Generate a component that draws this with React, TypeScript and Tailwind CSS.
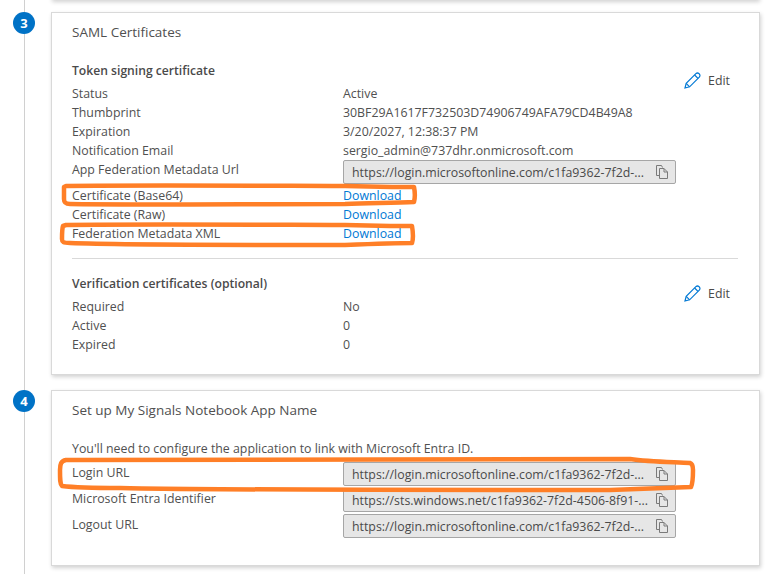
import type { ReactNode } from 'react';

const LOGIN_URL = 'https://login.microsoftonline.com/c1fa9362-7f2d-...';
const ENTRA_URL = 'https://sts.windows.net/c1fa9362-7f2d-4506-8f91-...';

function CopyIcon() {
  return (
    <svg width="12" height="14" viewBox="0 0 12 14" fill="none" stroke="#7a7a7a" strokeWidth="1" className="shrink-0">
      <path d="M3.5 10.5H0.5V0.5H5.5L6.5 2.5" />
      <path d="M3.5 3.5H8L11.5 7V13.5H3.5Z" />
      <path d="M8 3.5V7H11.5" />
    </svg>
  );
}

function PencilIcon() {
  return (
    <svg width="17" height="17" viewBox="0 0 17 17" fill="none" stroke="#0078d4" strokeWidth="1.2" className="shrink-0">
      <path d="M1 16L2.2 11.4L11.9 1.7C12.8 0.8 14.1 0.8 15 1.7L15.3 2C16.2 2.9 16.2 4.2 15.3 5.1L5.6 14.8Z" />
      <path d="M2.2 11.4L5.6 14.8" />
      <path d="M10.6 3L14 6.4" />
    </svg>
  );
}

function CopyField({ value }: { value: string }) {
  return (
    <div className="flex h-[24px] w-[333px] items-center justify-between rounded-[2px] border border-[#a6a6a6] bg-[#e6e6e6] pl-[8px] pr-[7px] text-[#4a4a4a]">
      <span className="whitespace-nowrap">{value}</span>
      <CopyIcon />
    </div>
  );
}

function Row({ label, children }: { label: string; children: ReactNode }) {
  return (
    <div className="grid h-[19px] grid-cols-[271px_1fr] items-center">
      <span className="whitespace-nowrap">{label}</span>
      <span className="whitespace-nowrap">{children}</span>
    </div>
  );
}

function Download() {
  return <span className="text-[#0078d4]">Download</span>;
}

function EditButton() {
  return (
    <div className="mr-[7px] mt-[10px] flex items-center gap-[7px] self-start text-[#4a4a4a]">
      <PencilIcon />
      <span className="pr-[1px]">Edit</span>
    </div>
  );
}

function Badge({ n, className }: { n: number; className: string }) {
  return (
    <div className={`absolute left-[13px] flex h-[22px] w-[22px] items-center justify-center rounded-full bg-[#0072c6] text-[13px] font-bold text-white ${className}`}>
      {n}
    </div>
  );
}

export default function App() {
  return (
    <div
      className="relative h-[574px] w-[773px] overflow-hidden bg-white text-[12.35px] leading-[19px] text-[#505050]"
      style={{ fontFamily: '"Open Sans", "Noto Sans", sans-serif' }}
    >
      <div className="absolute bottom-0 left-[24px] top-0 w-px bg-[#d0d0d0]" />
      <div className="absolute left-[51px] right-[14px] top-[-10px] h-[10px] shadow-[1px_2px_4px_rgba(0,0,0,0.18)]" />
      <Badge n={3} className="top-[12px]" />
      <Badge n={4} className="top-[390px]" />

      <div className="flex flex-col gap-[15px] pl-[51px] pr-[13px] pt-[12px]">
        <section className="h-[363px] border border-[#d9d9d9] bg-white pl-[20px] pr-[21px] pt-[10px] shadow-[1px_2px_4px_rgba(0,0,0,0.18)]">
          <h2 className="text-[13.5px] leading-[19px] text-[#505050]">SAML Certificates</h2>

          <div className="mt-[19px] flex justify-between">
            <div className="flex-1">
              <h3 className="mb-[4px] text-[12.15px] font-semibold text-[#4a4a4a]">Token signing certificate</h3>
              <Row label="Status">Active</Row>
              <Row label="Thumbprint">30BF29A1617F732503D74906749AFA79CD4B49A8</Row>
              <Row label="Expiration">3/20/2027, 12:38:37 PM</Row>
              <Row label="Notification Email">sergio_admin@737dhr.onmicrosoft.com</Row>
              <div className="grid h-[26px] grid-cols-[271px_1fr]">
                <span className="whitespace-nowrap">App Federation Metadata Url</span>
                <CopyField value={LOGIN_URL} />
              </div>
              <Row label="Certificate (Base64)"><Download /></Row>
              <Row label="Certificate (Raw)"><Download /></Row>
              <Row label="Federation Metadata XML"><Download /></Row>
            </div>
            <EditButton />
          </div>

          <div className="mt-[15px] h-px bg-[#d9d9d9]" />

          <div className="mt-[15px] flex justify-between">
            <div className="flex-1">
              <h3 className="mb-[4px] text-[12.15px] font-semibold text-[#4a4a4a]">Verification certificates (optional)</h3>
              <Row label="Required">No</Row>
              <Row label="Active">0</Row>
              <Row label="Expired">0</Row>
            </div>
            <EditButton />
          </div>
        </section>

        <section className="h-[176px] border border-[#d9d9d9] bg-white pl-[20px] pr-[20px] pt-[10px] shadow-[1px_2px_4px_rgba(0,0,0,0.18)]">
          <h2 className="text-[13.5px] leading-[19px] text-[#505050]">Set up My Signals Notebook App Name</h2>
          <p className="mt-[19px] h-[23px]">You'll need to configure the application to link with Microsoft Entra ID.</p>
          <div className="flex flex-col gap-[2px]">
            {[
              ['Login URL', LOGIN_URL],
              ['Microsoft Entra Identifier', ENTRA_URL],
              ['Logout URL', LOGIN_URL],
            ].map(([label, url]) => (
              <div key={label} className="grid grid-cols-[271px_1fr]">
                <span className="whitespace-nowrap pt-[1px]">{label}</span>
                <CopyField value={url} />
              </div>
            ))}
          </div>
        </section>
      </div>

      {/* hand-drawn orange annotations on top of the screenshot */}
      <svg className="pointer-events-none absolute left-0 top-0" width="773" height="574" fill="none" stroke="#ff7f27" strokeWidth="4.5" strokeLinejoin="round" strokeLinecap="round">
        <path d="M66 186C150 185 300 186 345 186L392 187L414 187C415 192 415 198 414 202C395 203 370 203 345 204C250 204 120 205 70 204C65 204 64 202 64 199C64 195 64 190 64 187Z" />
        <path d="M66 225C150 224 300 225 345 225L390 226L412 226C413 232 413 240 412 243C395 243 370 244 345 245C250 245 120 245 70 243C63 243 62 242 62 239C62 234 62 229 63 226Z" />
        <path d="M66 460C200 460 400 459 630 459C650 462 675 462 690 463C693 464 693 467 693 470C693 477 693 483 691 487C670 488 640 489 610 490C400 490 200 490 120 488C90 488 70 487 62 486C60 484 60 480 60 470C60 464 61 461 66 460Z" />
      </svg>
    </div>
  );
}
